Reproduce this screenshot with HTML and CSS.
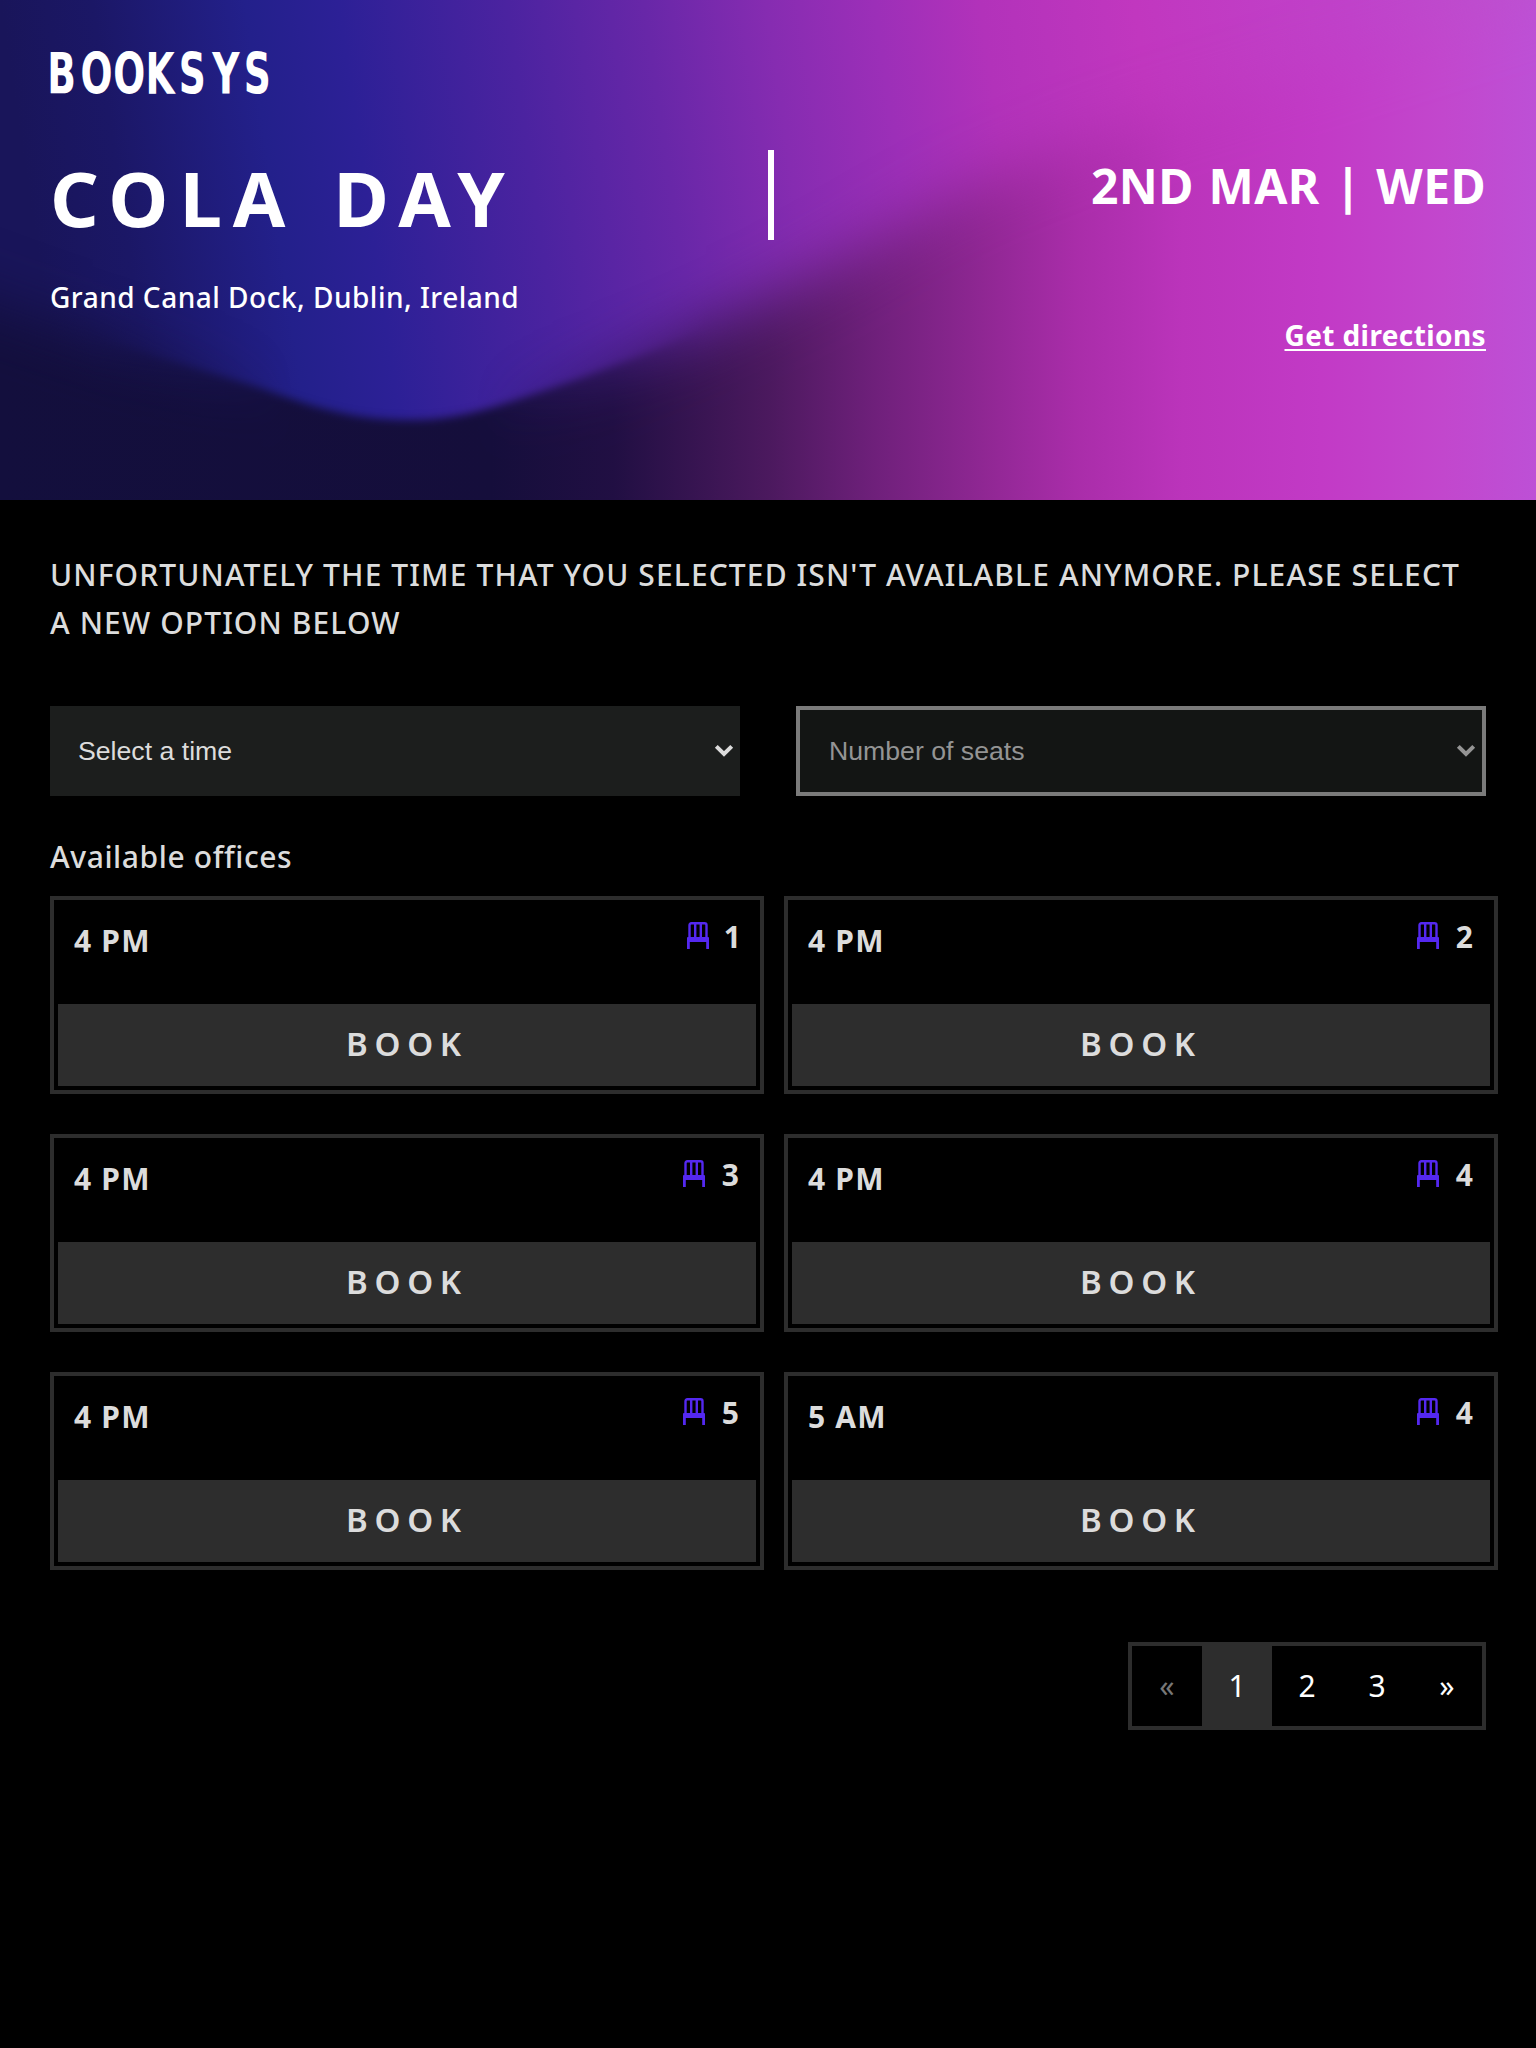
FILE: index.html
```html
<!DOCTYPE html>
<html lang="en">
<head>
<meta charset="utf-8">
<title>Booksys</title>
<link rel="stylesheet" href="styles.css">
</head>
<body>
<svg class="sprite" aria-hidden="true">
  <symbol id="chair" viewBox="0 0 22 27">
    <path d="M2.5 15V3.2Q2.5 1.3 4.4 1.3H17.6Q19.5 1.3 19.5 3.2V15M8.2 1.5V15M13.8 1.5V15" fill="none" stroke="currentColor" stroke-width="2.4"/>
    <path d="M0 16Q0 15 1 15H21Q22 15 22 16V27H19.2V20H2.8V27H0Z" fill="currentColor"/>
  </symbol>
  <symbol id="chevron" viewBox="0 0 20 14">
    <path d="M2.3 2.3 10 10 17.7 2.3" fill="none" stroke="currentColor" stroke-width="4"/>
  </symbol>
</svg>

<header class="hero">
  <svg class="hero-art" viewBox="0 0 1536 500" preserveAspectRatio="none" aria-hidden="true">
    <defs>
      <linearGradient id="upper" gradientUnits="userSpaceOnUse" x1="0" y1="0" x2="1500" y2="-220">
        <stop offset="0" stop-color="#19155a"/>
        <stop offset=".06" stop-color="#1b1766"/>
        <stop offset=".16" stop-color="#23208b"/>
        <stop offset=".22" stop-color="#2c2096"/>
        <stop offset=".33" stop-color="#4b23a0"/>
        <stop offset=".42" stop-color="#6827a8"/>
        <stop offset=".5" stop-color="#862cb1"/>
        <stop offset=".57" stop-color="#9c2fb8"/>
        <stop offset=".64" stop-color="#b232ba"/>
        <stop offset=".74" stop-color="#c137bf"/>
        <stop offset=".88" stop-color="#c042ca"/>
        <stop offset="1" stop-color="#bd52d0"/>
      </linearGradient>
      <linearGradient id="lower" gradientUnits="userSpaceOnUse" x1="0" y1="0" x2="1536" y2="0">
        <stop offset="0" stop-color="#130f3d"/>
        <stop offset=".32" stop-color="#150e3b"/>
        <stop offset=".4" stop-color="#210f43"/>
        <stop offset=".5" stop-color="#4b195e"/>
        <stop offset=".57" stop-color="#6f207b"/>
        <stop offset=".64" stop-color="#8f2793"/>
        <stop offset=".7" stop-color="#a92da9"/>
        <stop offset=".77" stop-color="#bb34bb"/>
        <stop offset=".86" stop-color="#c23ac6"/>
        <stop offset=".94" stop-color="#c247cd"/>
        <stop offset="1" stop-color="#bd50d6"/>
      </linearGradient>
      <linearGradient id="focus">
        <stop offset=".06" stop-color="#000"/>
        <stop offset=".19" stop-color="#fff"/>
        <stop offset=".31" stop-color="#fff"/>
        <stop offset=".46" stop-color="#000"/>
      </linearGradient>
      <filter id="crisp" x="-20%" y="-20%" width="140%" height="140%"><feGaussianBlur stdDeviation="4"/></filter>
      <filter id="soft" x="-20%" y="-40%" width="140%" height="180%"><feGaussianBlur stdDeviation="30"/></filter>
      <path id="wave" d="M-150 250L0 306C80 335 170 360 260 388C330 414 365 420 412 420C465 420 510 402 570 382C660 350 705 330 768 300C850 260 900 225 970 190C1060 150 1130 125 1250 90L1700 -50V640H-150Z"/>
      <mask id="window" maskUnits="userSpaceOnUse" x="0" y="0" width="1536" height="500">
        <rect width="1536" height="500" fill="url(#focus)"/>
      </mask>
      <mask id="wave-mask" maskUnits="userSpaceOnUse" x="0" y="0" width="1536" height="500">
        <use href="#wave" fill="#fff" filter="url(#soft)"/>
        <g mask="url(#window)">
          <rect width="1536" height="500" fill="#000"/>
          <use href="#wave" fill="#fff" filter="url(#crisp)"/>
        </g>
      </mask>
    </defs>
    <rect width="1536" height="500" fill="url(#upper)"/>
    <rect width="1536" height="500" fill="url(#lower)" mask="url(#wave-mask)"/>
  </svg>
  <div class="hero-content">
    <svg class="logo" width="250" height="60" viewBox="-10 0 250 60" role="img" aria-label="Booksys">
      <text transform="scale(.66 1)" y="48.5" x="-4.2 46.4 95.7 144.8 195 246 293.5">BOOKSYS</text>
    </svg>
    <div class="event">
      <h1 class="event-title">COLA DAY</h1>
      <span class="event-divider"></span>
      <p class="event-date">2ND MAR | WED</p>
    </div>
    <div class="place">
      <p class="address">Grand Canal Dock, Dublin, Ireland</p>
      <a class="directions" href="#">Get directions</a>
    </div>
  </div>
</header>

<main class="content">
  <p class="notice">UNFORTUNATELY THE TIME THAT YOU SELECTED ISN'T AVAILABLE ANYMORE. PLEASE SELECT<br>A NEW OPTION BELOW</p>
  <div class="filters">
    <div class="field">
      <select class="select"><option>Select a time</option></select>
      <svg class="chevron"><use href="#chevron"/></svg>
    </div>
    <div class="field field-disabled">
      <select class="select" disabled><option>Number of seats</option></select>
      <svg class="chevron"><use href="#chevron"/></svg>
    </div>
  </div>
  <h2 class="list-title">Available offices</h2>
  <div class="offices">
    <article class="office"><div class="office-info"><span class="time">4 PM</span><span class="seats seats-single"><svg class="chair"><use href="#chair"/></svg>1</span></div><button class="book">BOOK</button></article>
    <article class="office"><div class="office-info"><span class="time">4 PM</span><span class="seats"><svg class="chair"><use href="#chair"/></svg>2</span></div><button class="book">BOOK</button></article>
    <article class="office"><div class="office-info"><span class="time">4 PM</span><span class="seats"><svg class="chair"><use href="#chair"/></svg>3</span></div><button class="book">BOOK</button></article>
    <article class="office"><div class="office-info"><span class="time">4 PM</span><span class="seats"><svg class="chair"><use href="#chair"/></svg>4</span></div><button class="book">BOOK</button></article>
    <article class="office"><div class="office-info"><span class="time">4 PM</span><span class="seats"><svg class="chair"><use href="#chair"/></svg>5</span></div><button class="book">BOOK</button></article>
    <article class="office"><div class="office-info"><span class="time">5 AM</span><span class="seats"><svg class="chair"><use href="#chair"/></svg>4</span></div><button class="book">BOOK</button></article>
  </div>
  <nav class="pagination">
    <a class="page page-off">«</a>
    <a class="page page-current">1</a>
    <a class="page">2</a>
    <a class="page">3</a>
    <a class="page">»</a>
  </nav>
</main>
</body>
</html>
```
FILE: styles.css
```css
* { box-sizing: border-box; }
body {
  margin: 0;
  min-height: 2048px;
  background: #000;
  color: #dcdcdc;
  font-family: "Noto Sans", sans-serif;
}
h1, h2, p { margin: 0; }
.sprite { position: absolute; width: 0; height: 0; }

.hero { position: relative; height: 500px; overflow: hidden; color: #fff; }
.hero-art { position: absolute; inset: 0; width: 100%; height: 100%; }
.hero-content { position: relative; padding: 45px 50px 0; }
.logo { display: block; margin-left: -10px; overflow: visible; }
.logo text { font: 700 57px "DejaVu Sans", sans-serif; fill: #fff; }
.event {
  display: grid;
  grid-template: 90px / 718px 6px 1fr;
  margin-top: 45px;
}
.event-title {
  font-size: 76px;
  line-height: 95px;
  font-weight: 700;
  letter-spacing: 11px;
  word-spacing: 6px;
  white-space: nowrap;
}
.event-divider { background: #fff; }
.event-date {
  font-size: 48px;
  line-height: 71px;
  font-weight: 700;
  letter-spacing: .4px;
  word-spacing: 2px;
  text-align: right;
}
.place { display: flex; justify-content: space-between; height: 110px; padding-top: 37px; }
.address { font-size: 28px; line-height: 40px; font-weight: 500; letter-spacing: .5px; }
.directions {
  align-self: flex-start;
  margin-top: 38px;
  color: #fff;
  font-size: 28px;
  line-height: 40px;
  font-weight: 700;
  letter-spacing: .4px;
  text-decoration-thickness: 2px;
  text-underline-offset: 3px;
}

.content { padding: 51px 50px 0; }
.notice { font-size: 30px; line-height: 48px; font-weight: 500; letter-spacing: 1.11px; white-space: nowrap; }
.filters { display: grid; grid-template-columns: 1fr 1fr; gap: 56px; margin-top: 59px; }
.field { position: relative; height: 90px; }
.select {
  width: 100%;
  height: 100%;
  padding: 0 28px;
  border: 0;
  border-radius: 0;
  appearance: none;
  background: #1c1e1d;
  color: #dcdcdc;
  opacity: 1;
  font: 26.67px "Liberation Sans", sans-serif;
}
.chevron { position: absolute; right: 6px; top: 38px; width: 20px; height: 14px; }
.field-disabled .select { padding-left: 29px; border: 4px solid #7b7b7b; background: #131514; color: #949494; }
.field-disabled .chevron { right: 10px; color: #949494; }

.list-title { margin-top: 36px; font-size: 30px; line-height: 50px; font-weight: 500; letter-spacing: .6px; }
.offices {
  display: grid;
  grid-template-columns: 714px 714px;
  column-gap: 20px;
  row-gap: 40px;
  margin-top: 14px;
}
.office { display: flex; flex-direction: column; height: 198px; padding: 4px; border: 4px solid #2d2d2d; }
.office-info { display: flex; justify-content: space-between; flex: 1; padding: 14px 17px 0 16px; font-weight: 700; }
.time { font-size: 30px; line-height: 46px; letter-spacing: 1.2px; }
.seats { display: flex; align-items: flex-start; font-size: 30px; line-height: 38px; }
.chair { width: 22px; height: 27px; margin: 4px 17px 0 0; color: #5428f0; }
.seats-single { letter-spacing: -2px; }
.seats-single .chair { margin-right: 15px; }
.book {
  height: 82px;
  padding: 0 0 3px;
  border: 0;
  background: #2d2d2d;
  color: #dcdcdc;
  font: 600 33px "Noto Sans", sans-serif;
  letter-spacing: 6.7px;
}

.pagination {
  display: grid;
  grid-template-columns: repeat(5, 70px);
  width: 358px;
  height: 88px;
  margin: 72px 0 0 auto;
  border: 4px solid #2d2d2d;
  color: #fff;
}
.page { font-size: 30px; line-height: 79px; text-align: center; }
.page-off { color: #777; }
.page-current { background: #2d2d2d; }
```
